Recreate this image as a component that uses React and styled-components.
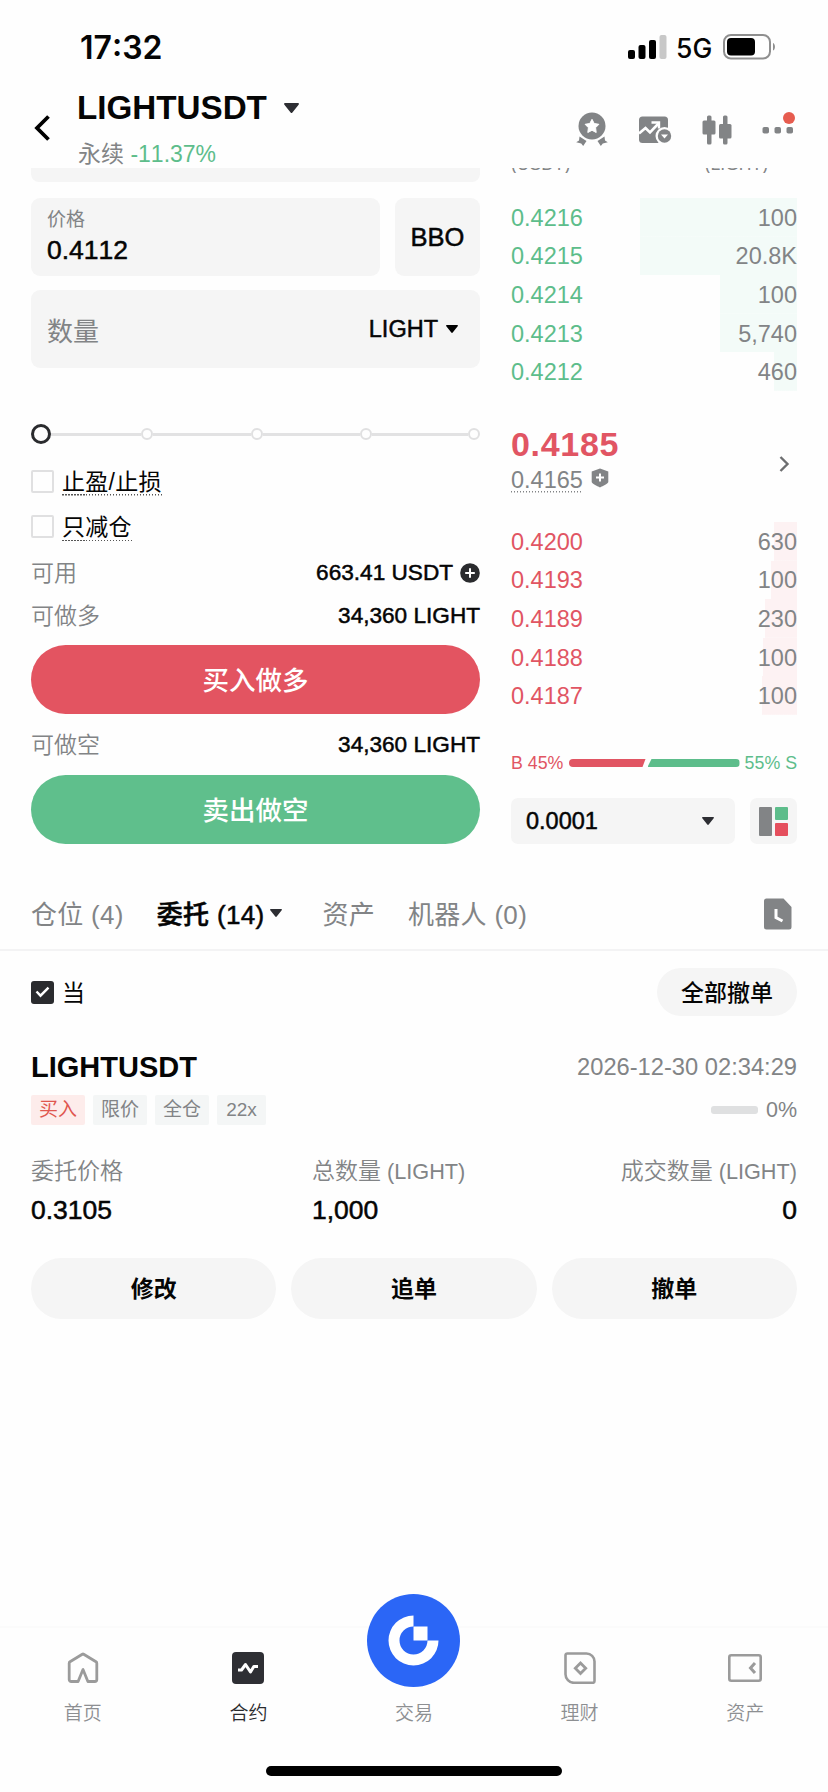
import React from 'react'
import styled, { createGlobalStyle } from 'styled-components'

// *****************************
// data
// *****************************
const BIDS = [
  { price: '0.4216', size: '100', depth: 157 },
  { price: '0.4215', size: '20.8K', depth: 157 },
  { price: '0.4214', size: '100', depth: 77 },
  { price: '0.4213', size: '5,740', depth: 77 },
  { price: '0.4212', size: '460', depth: 23 },
]

const ASKS = [
  { price: '0.4200', size: '630', depth: 23 },
  { price: '0.4193', size: '100', depth: 26 },
  { price: '0.4189', size: '230', depth: 32 },
  { price: '0.4188', size: '100', depth: 34 },
  { price: '0.4187', size: '100', depth: 35 },
]

const TAGS = ['限价', '全仓', '22x']

// *****************************
// icons
// *****************************
const SignalIcon = () => (
  <svg width="39" height="25" viewBox="0 0 39 25">
    <rect x="0" y="15" width="7" height="9" rx="2" />
    <rect x="10.5" y="10" width="7" height="14" rx="2" />
    <rect x="21" y="5" width="7" height="19" rx="2" />
    <rect x="31.5" y="0" width="7" height="24" rx="2" fill="#c8c8c8" />
  </svg>
)

const BatteryIcon = () => (
  <svg width="54" height="26" viewBox="0 0 54 26">
    <rect x="1" y="1" width="46" height="23.5" rx="7" fill="none" stroke="#8f8f8f" strokeWidth="2" />
    <rect x="4" y="4" width="28" height="17.5" rx="4" />
    <path d="M50 9c2.6.8 2.6 6.8 0 7.6z" fill="#8f8f8f" />
  </svg>
)

const BackIcon = () => (
  <svg width="17" height="28" viewBox="0 0 17 28">
    <path d="M14.5 2.5 3 14l11.5 11.5" fill="none" stroke="#000" strokeWidth="3.8" />
  </svg>
)

const Caret = ({ width = 15, height = 9, color = '#2d2e33' }) => (
  <svg width={width} height={height} viewBox="0 0 15 9" preserveAspectRatio="none">
    <path d="M1 0h13c1 0 1.2.9.6 1.5L8.4 8.5c-.5.6-1.3.6-1.8 0L.4 1.5C-.2.9 0 0 1 0z" fill={color} />
  </svg>
)

const MedalIcon = () => (
  <svg width="34" height="36" viewBox="0 0 34 36">
    <circle cx="17" cy="14" r="13.5" fill="#828486" />
    <path
      d="m17 7.3 2.2 4.2 4.7.8-3.3 3.4.6 4.8-4.2-2.2-4.2 2.2.6-4.8-3.3-3.4 4.7-.8z"
      fill="#fff"
      stroke="#fff"
      strokeWidth="1"
      strokeLinejoin="round"
    />
    <path d="m4.5 24.5 7 4.5-3.3 5-2-2.5-5-1.3 2.8-1.8zM29.5 24.5l-7 4.5 3.3 5 2-2.5 5-1.3-2.8-1.8z" fill="#828486" />
  </svg>
)

const ChartIcon = () => (
  <svg width="33" height="28" viewBox="0 0 33 28">
    <rect x="0" y="0.5" width="29" height="26.5" rx="3.5" fill="#828486" />
    <path d="m0 17.5 6.5-5.5 4.5 4.5 8.5-9" fill="none" stroke="#fff" strokeWidth="2.6" />
    <path d="M12.5 6.5H20v6" fill="none" stroke="#fff" strokeWidth="2.4" />
    <circle cx="25.5" cy="20" r="9" fill="#fefefe" />
    <circle cx="25.5" cy="20" r="6.7" fill="#828486" />
    <path d="M22 18.5h7l-3.5 4z" fill="#fff" />
  </svg>
)

const CandlesIcon = () => (
  <svg width="30" height="30" viewBox="0 0 30 30" fill="#828486">
    <rect x="5" y="0.5" width="4.5" height="29" rx="1.5" />
    <rect x="0.5" y="5.5" width="13" height="14" rx="1.5" />
    <rect x="21" y="0.5" width="4.5" height="29" rx="1.5" />
    <rect x="17" y="9" width="12.5" height="14.5" rx="1.5" />
  </svg>
)

const MoreIcon = () => (
  <svg width="34" height="36" viewBox="0 0 34 36">
    <g fill="#828486">
      <rect x="0.5" y="15" width="6.5" height="6.5" rx="1.8" />
      <rect x="12.5" y="15" width="6.5" height="6.5" rx="1.8" />
      <rect x="24.5" y="15" width="6.5" height="6.5" rx="1.8" />
    </g>
    <circle cx="27" cy="6" r="6" fill="#e65c4f" />
  </svg>
)

const PlusIcon = () => (
  <svg width="20" height="20" viewBox="0 0 20 20">
    <circle cx="10" cy="10" r="9.8" fill="#2a2b2e" />
    <path d="M10 5.2v9.6M5.2 10h9.6" stroke="#fff" strokeWidth="2" />
  </svg>
)

const ShieldIcon = () => (
  <svg width="18" height="20" viewBox="0 0 18 20">
    <path d="M9 .5 17.3 3.5v10.500c0 1.500-5.300 3.800-8.300 5.500-3-1.700-8.300-4-8.300-5.500V3.500z" fill="#828486" />
    <path d="M9 5.500v8M5 9.500h8" stroke="#fff" strokeWidth="2" />
  </svg>
)

const NextIcon = () => (
  <svg width="11" height="18" viewBox="0 0 11 18">
    <path d="m1.5 2 7 7-7 7" fill="none" stroke="#6d6e70" strokeWidth="2.4" />
  </svg>
)

const LayoutIcon = () => (
  <svg width="29" height="29" viewBox="0 0 29 29">
    <rect width="13" height="29" rx="1" fill="#828486" />
    <rect x="16" width="13" height="13" rx="1" fill="#5dbd8b" />
    <rect x="16" y="16" width="13" height="13" rx="1" fill="#e54f5d" />
  </svg>
)

const HistoryIcon = () => (
  <svg width="28" height="32" viewBox="0 0 28 32">
    <path d="M2.5.5h17l8 8.5v20a2.5 2.5 0 0 1-2.5 2.5H2.5A2.5 2.5 0 0 1 0 29V3A2.5 2.5 0 0 1 2.5.5z" fill="#828486" />
    <path d="M12 11v8.5l6.5 3.5" fill="none" stroke="#fff" strokeWidth="3" />
  </svg>
)

const CheckIcon = () => (
  <svg width="15" height="12" viewBox="0 0 15 12">
    <path d="m1.5 5.500 4 4.200 8-8" fill="none" stroke="#fff" strokeWidth="2.4" />
  </svg>
)

const HomeIcon = () => (
  <svg width="32" height="32" viewBox="0 0 32 32">
    <path
      d="M15.3 2.2a1.5 1.5 0 0 1 1.4 0L29 9.8c.5.3.8.8.8 1.4v16.300a2 2 0 0 1-2 2h-6.900L16 17.5l-4.900 12H4.200a2 2 0 0 1-2-2V11.200c0-.6.3-1.100.8-1.400z"
      fill="none"
      stroke="#9b9b9b"
      strokeWidth="2.8"
      strokeLinejoin="round"
    />
  </svg>
)

const FuturesIcon = () => (
  <svg width="32" height="32" viewBox="0 0 32 32">
    <rect width="32" height="32" rx="4" fill="#2e2f34" />
    <path d="M6 18h3.5l4-5.5 5 7.5 3.3-5.5H26" fill="none" stroke="#fff" strokeWidth="3" strokeLinejoin="round" />
  </svg>
)

const EarnIcon = () => (
  <svg width="32" height="32" viewBox="0 0 32 32">
    <path
      d="M3.3 1.5h19.200a8 8 0 0 1 8 8V29a1.800 1.800 0 0 1-1.800 1.800H10A8.500 8.500 0 0 1 1.500 22V3.300A1.800 1.800 0 0 1 3.300 1.500z"
      fill="none"
      stroke="#9b9b9b"
      strokeWidth="2.6"
    />
    <path d="m16.500 11 5.200 5.200-5.200 5.200-5.200-5.200z" fill="none" stroke="#9b9b9b" strokeWidth="2.8" />
  </svg>
)

const WalletIcon = () => (
  <svg width="34" height="28" viewBox="0 0 34 28">
    <rect x="1.3" y="1.3" width="31.4" height="25.4" rx="2" fill="none" stroke="#9b9b9b" strokeWidth="2.6" />
    <path d="m27 9-4.5 5 4.500 5" fill="none" stroke="#9b9b9b" strokeWidth="3" />
  </svg>
)

const TradeIcon = () => (
  <svg width="93" height="93" viewBox="0 0 93 93">
    <circle cx="46.5" cy="46.5" r="46.5" fill="#2b66f6" />
    <path d="M46.5 21.5a25 25 0 1 0 25 25h-11a14 14 0 1 1-14-14z" fill="#fff" />
    <rect x="46.5" y="32.5" width="14" height="14" fill="#fff" />
  </svg>
)

// *****************************
// order book
// *****************************
const BookSide = ({ rows, side }) => (
  <BookRows>
    {rows.map(({ price, size, depth }) => (
      <BookRow key={price} $side={side} style={{ backgroundSize: `${depth}px 100%` }}>
        <BookPrice $side={side}>{price}</BookPrice>
        <BookSize>{size}</BookSize>
      </BookRow>
    ))}
  </BookRows>
)

export default () => (
  <Screen>
    <GlobalStyle />
    <StatusBar>
      <Clock>17:32</Clock>
      <StatusIcons>
        <SignalIcon />
        <Network>5G</Network>
        <BatteryIcon />
      </StatusIcons>
    </StatusBar>

    <Header>
      <BackIcon />
      <Pair>
        <PairName>
          LIGHTUSDT
          <Caret height={10} />
        </PairName>
        <PairInfo>
          永续 <Change>-11.37%</Change>
        </PairInfo>
      </Pair>
      <HeaderIcons>
        <MedalIcon />
        <ChartIcon />
        <CandlesIcon />
        <MoreIcon />
      </HeaderIcons>
    </Header>

    <Trade>
      <Form>
        <ScrolledField />
        <FieldRow>
          <PriceField>
            <FieldLabel>价格</FieldLabel>
            <FieldValue>0.4112</FieldValue>
          </PriceField>
          <BboButton>BBO</BboButton>
        </FieldRow>
        <AmountField>
          <Placeholder>数量</Placeholder>
          <Unit>
            LIGHT
            <Caret width={12} height={8} color="#000" />
          </Unit>
        </AmountField>
        <Slider>
          <Thumb />
          <Track $width={90} />
          <Stop />
          <Track $width={98} />
          <Stop />
          <Track $width={97} />
          <Stop />
          <Track $width={96} />
          <Stop />
        </Slider>
        <Option>
          <Checkbox />
          <OptionLabel>止盈/止损</OptionLabel>
        </Option>
        <Option>
          <Checkbox />
          <OptionLabel>只减仓</OptionLabel>
        </Option>
        <Balance $height={43}>
          <BalanceLabel>可用</BalanceLabel>
          <BalanceValue>
            663.41 USDT
            <PlusIcon />
          </BalanceValue>
        </Balance>
        <Balance $height={43}>
          <BalanceLabel>可做多</BalanceLabel>
          <BalanceValue>34,360 LIGHT</BalanceValue>
        </Balance>
        <Submit $side="buy">买入做多</Submit>
        <Balance $height={61}>
          <BalanceLabel>可做空</BalanceLabel>
          <BalanceValue>34,360 LIGHT</BalanceValue>
        </Balance>
        <Submit $side="sell">卖出做空</Submit>
      </Form>

      <Book>
        <BookHead>
          <span>(USDT)</span>
          <span>(LIGHT)</span>
        </BookHead>
        <BookSide rows={BIDS} side="bid" />
        <Ticker>
          <Prices>
            <LastPrice>0.4185</LastPrice>
            <MarkPrice>
              <MarkValue>0.4165</MarkValue>
              <ShieldIcon />
            </MarkPrice>
          </Prices>
          <NextIcon />
        </Ticker>
        <BookSide rows={ASKS} side="ask" />
        <Ratio>
          <RatioText $side="ask">B 45%</RatioText>
          <RatioBar>
            <RatioBuy />
            <RatioSell />
          </RatioBar>
          <RatioText $side="bid">55% S</RatioText>
        </Ratio>
        <BookTools>
          <StepSelect>
            0.0001
            <Caret width={12} height={8} />
          </StepSelect>
          <LayoutButton>
            <LayoutIcon />
          </LayoutButton>
        </BookTools>
      </Book>
    </Trade>

    <Tabs>
      <Tab $gap={33}>仓位 (4)</Tab>
      <Tab $active $gap={40}>
        委托 (14)
        <Caret width={12} height={8} />
      </Tab>
      <Tab $gap={33}>资产</Tab>
      <Tab>机器人 (0)</Tab>
      <HistoryIcon />
    </Tabs>

    <Filter>
      <Checked>
        <CheckIcon />
      </Checked>
      <FilterLabel>当</FilterLabel>
      <CancelAll>全部撤单</CancelAll>
    </Filter>

    <Order>
      <OrderHead>
        <OrderName>LIGHTUSDT</OrderName>
        <OrderTime>2026-12-30 02:34:29</OrderTime>
      </OrderHead>
      <OrderMeta>
        <Tag $buy>买入</Tag>
        {TAGS.map(tag => (
          <Tag key={tag}>{tag}</Tag>
        ))}
        <Progress>
          <ProgressBar />
          0%
        </Progress>
      </OrderMeta>
      <OrderStats>
        <Stat>
          <StatLabel>委托价格</StatLabel>
          <StatValue>0.3105</StatValue>
        </Stat>
        <Stat>
          <StatLabel>
            总数量<Coin> (LIGHT)</Coin>
          </StatLabel>
          <StatValue>1,000</StatValue>
        </Stat>
        <Stat $right>
          <StatLabel>
            成交数量<Coin> (LIGHT)</Coin>
          </StatLabel>
          <StatValue>0</StatValue>
        </Stat>
      </OrderStats>
      <OrderActions>
        <ActionButton>修改</ActionButton>
        <ActionButton>追单</ActionButton>
        <ActionButton>撤单</ActionButton>
      </OrderActions>
    </Order>

    <NavBar>
      <NavItem>
        <NavIcon>
          <HomeIcon />
        </NavIcon>
        首页
      </NavItem>
      <NavItem $active>
        <NavIcon>
          <FuturesIcon />
        </NavIcon>
        合约
      </NavItem>
      <NavItem>
        <NavIcon $raised>
          <TradeIcon />
        </NavIcon>
        交易
      </NavItem>
      <NavItem>
        <NavIcon>
          <EarnIcon />
        </NavIcon>
        理财
      </NavItem>
      <NavItem>
        <NavIcon>
          <WalletIcon />
        </NavIcon>
        资产
      </NavItem>
    </NavBar>
    <HomeIndicator />
  </Screen>
)

const GlobalStyle = createGlobalStyle`
  * {
    box-sizing: border-box;
  }

  body {
    margin: 0;
    background: #fefefe;
  }

  button {
    margin: 0;
    padding: 0;
    border: 0;
    font: inherit;
    color: inherit;
  }

  svg {
    display: block;
    flex: none;
  }
`

const GREEN = '#5dbd8b'
const RED = '#e15563'
const GREY = '#828486'
const FIELD = '#f5f5f5'

// Liberation Sans has no medium cut, a thin stroke stands in for it
const medium = `
  font-weight: 500;
  -webkit-text-stroke: 0.5px currentColor;
`

const dotted = color => `
  background: repeating-linear-gradient(90deg, ${color} 0 1.5px, transparent 1.5px 3px) left bottom / 100% 1.5px no-repeat;
`

const Screen = styled.div`
  display: flex;
  flex-direction: column;
  width: 828px;
  height: 1792px;
  overflow: hidden;
  background: #fefefe;
  color: #050505;
  font-family: 'Liberation Sans', 'Noto Sans CJK SC', sans-serif;
  font-kerning: none;
  white-space: nowrap;
`

const StatusBar = styled.div`
  display: flex;
  justify-content: space-between;
  align-items: center;
  height: 94px;
  padding: 0 51px 0 80px;
  font-family: Inter, sans-serif;
`

const Clock = styled.div`
  padding-top: 1px;
  font-size: 32px;
  font-weight: 600;
`

const StatusIcons = styled.div`
  display: flex;
  align-items: center;
`

const Network = styled.div`
  width: 56px;
  padding: 2px 0 0 9px;
  font-size: 26.5px;
  font-weight: 500;
  line-height: 30px;
`

const Header = styled.div`
  display: flex;
  height: 74px;
  padding: 0 32px 0 34px;

  & > svg {
    margin-top: 20px;
  }
`

const Pair = styled.div`
  margin-left: 26px;
`

const PairName = styled.div`
  display: flex;
  align-items: center;
  gap: 17px;
  height: 28px;
  font-size: 33.2px;
  font-weight: 700;
`

const PairInfo = styled.div`
  margin-top: 16px;
  padding-left: 1px;
  color: ${GREY};
  font-size: 23px;
  line-height: 32px;
`

const Change = styled.span`
  color: ${GREEN};
`

const HeaderIcons = styled.div`
  display: flex;
  gap: 30px;
  align-items: center;
  margin: 0 0 0 auto;
  height: 72px;
`

const Trade = styled.div`
  display: flex;
  justify-content: space-between;
  padding: 0 31px;
`

const Form = styled.div`
  width: 449px;
`

/* lower edge of the field that is scrolled under the header */
const ScrolledField = styled.div`
  height: 14px;
  border-radius: 0 0 8px 8px;
  background: ${FIELD};
`

const FieldRow = styled.div`
  display: flex;
  gap: 15px;
  margin-top: 16px;
`

const PriceField = styled.div`
  flex: 1;
  height: 78px;
  padding: 8px 16px 0;
  border-radius: 9px;
  background: ${FIELD};
`

const FieldLabel = styled.div`
  height: 28px;
  color: ${GREY};
  font-size: 19px;
  line-height: 28px;
`

const FieldValue = styled.div`
  ${medium}
  font-size: 26.5px;
  line-height: 32px;
`

const BboButton = styled.button`
  ${medium}
  width: 85px;
  height: 78px;
  border-radius: 9px;
  background: ${FIELD};
  font-size: 25.5px;
`

const AmountField = styled.div`
  display: flex;
  justify-content: space-between;
  align-items: center;
  height: 78px;
  margin-top: 14px;
  padding: 0 22px 0 16px;
  border-radius: 9px;
  background: ${FIELD};
`

const Placeholder = styled.div`
  color: ${GREY};
  font-size: 26px;
`

const Unit = styled.div`
  ${medium}
  display: flex;
  align-items: center;
  gap: 8px;
  font-size: 23.5px;
`

const Slider = styled.div`
  display: flex;
  align-items: center;
  height: 20px;
  margin: 56px 0 16px;
`

const Thumb = styled.div`
  width: 20px;
  height: 20px;
  border: 3px solid #2a2b2e;
  border-radius: 50%;
`

const Track = styled.div`
  width: ${({ $width }) => $width}px;
  height: 3px;
  background: #e2e2e3;
`

const Stop = styled.div`
  width: 12px;
  height: 12px;
  border: 2px solid #e0e0e1;
  border-radius: 50%;
`

const Option = styled.div`
  display: flex;
  align-items: center;
  gap: 8px;
  height: 45.5px;
`

const Checkbox = styled.div`
  width: 23px;
  height: 23px;
  margin-bottom: 3px;
  border: 2px solid #e0e0e1;
  border-radius: 2px;
`

const OptionLabel = styled.div`
  height: 27px;
  margin-bottom: 1px;
  font-size: 23px;
  letter-spacing: 0.3px;
  line-height: 26px;
  ${dotted('#555')}
`

const Balance = styled.div`
  display: flex;
  justify-content: space-between;
  align-items: center;
  height: ${({ $height }) => $height}px;
`

const BalanceLabel = styled.div`
  color: ${GREY};
  font-size: 23px;
  font-weight: 350;
  line-height: 30px;
`

const BalanceValue = styled.div`
  ${medium}
  display: flex;
  align-items: center;
  gap: 7px;
  font-size: 22.6px;
  line-height: 30px;
`

const Submit = styled.button`
  width: 100%;
  height: 69px;
  margin-top: ${({ $side }) => ($side === 'buy' ? 8 : 0)}px;
  padding-bottom: 2px;
  border-radius: 35px;
  background: ${({ $side }) => ($side === 'buy' ? '#e35461' : '#5fbf8c')};
  color: #fff;
  font-size: 26.5px;
  font-weight: 500;
`

const Book = styled.div`
  width: 286px;
`

const BookHead = styled.div`
  display: flex;
  justify-content: space-between;
  align-items: flex-end;
  height: 5px;
  margin-bottom: 25px;
  padding-right: 29px;
  overflow: hidden;
  color: ${GREY};
  font-size: 17.5px;
  line-height: 18px;
`

const BookRows = styled.div`
  display: flex;
  flex-direction: column;
  height: 193px;
`

const BookRow = styled.div`
  display: flex;
  flex: 1;
  justify-content: space-between;
  align-items: center;
  padding-top: 2px;
  font-size: 23.5px;
  background: ${({ $side }) =>
      $side === 'bid' ? 'linear-gradient(#f3fbf8, #f3fbf8)' : 'linear-gradient(#fdf2f3, #fdf2f3)'}
    right / 0 100% no-repeat;
`

const BookPrice = styled.span`
  color: ${({ $side }) => ($side === 'bid' ? GREEN : RED)};
`

const BookSize = styled.span`
  color: ${GREY};
`

const Ticker = styled.div`
  display: flex;
  justify-content: space-between;
  align-items: center;
  height: 131px;
  padding: 14px 7px 0 0;
`

const Prices = styled.div`
  padding-bottom: 10px;
`

const LastPrice = styled.div`
  color: ${RED};
  font-size: 34px;
  font-weight: 700;
  letter-spacing: 0.7px;
  line-height: 38px;
`

const MarkPrice = styled.div`
  display: flex;
  align-items: center;
  gap: 8px;
  color: ${GREY};
  font-size: 23.5px;
`

const MarkValue = styled.div`
  height: 27px;
  margin-top: 3px;
  line-height: 29px;
  ${dotted('#828486')}
`

const Ratio = styled.div`
  display: flex;
  justify-content: space-between;
  align-items: center;
  height: 24px;
  margin-top: 36px;
`

const RatioText = styled.div`
  color: ${({ $side }) => ($side === 'bid' ? GREEN : RED)};
  font-size: 17.8px;
`

const RatioBar = styled.div`
  display: flex;
  width: 171px;
  height: 8px;
`

const RatioBuy = styled.div`
  width: 77px;
  border-radius: 4px 0 0 4px;
  background: ${RED};
  clip-path: polygon(0 0, 100% 0, calc(100% - 3px) 100%, 0 100%);
`

const RatioSell = styled.div`
  flex: 1;
  margin-left: 2px;
  border-radius: 0 4px 4px 0;
  background: ${GREEN};
  clip-path: polygon(4px 0, 100% 0, 100% 100%, 0 100%);
`

const BookTools = styled.div`
  display: flex;
  justify-content: space-between;
  margin-top: 23px;
`

const StepSelect = styled.div`
  ${medium}
  display: flex;
  justify-content: space-between;
  align-items: center;
  width: 224px;
  height: 46px;
  padding: 0 21px 0 15px;
  border-radius: 7px;
  background: ${FIELD};
  font-size: 23.5px;
`

const LayoutButton = styled.div`
  display: flex;
  justify-content: center;
  align-items: center;
  width: 47px;
  height: 46px;
  border-radius: 7px;
  background: ${FIELD};
`

const Tabs = styled.div`
  display: flex;
  align-items: center;
  height: 107px;
  padding: 33px 36px 0 31px;
  border-bottom: 2px solid #f3f3f4;

  & > svg {
    margin: 1px 0 0 auto;
  }
`

const Tab = styled.div`
  display: flex;
  align-items: center;
  gap: 6px;
  margin-right: ${({ $gap = 0 }) => $gap}px;
  padding-bottom: 2px;
  color: ${GREY};
  font-size: 26px;
  letter-spacing: 0.3px;
  ${({ $active }) => $active && `${medium} color: #050505;`}

  & > svg {
    margin-top: 2px;
  }
`

const Filter = styled.div`
  display: flex;
  align-items: center;
  height: 48px;
  margin-top: 17px;
  padding: 0 31px;
`

const Checked = styled.div`
  display: flex;
  justify-content: center;
  align-items: center;
  width: 23px;
  height: 23px;
  border-radius: 3px;
  background: #2a2b2e;
`

const FilterLabel = styled.div`
  margin-left: 8px;
  padding-bottom: 2px;
  font-size: 23px;
`

const CancelAll = styled.button`
  width: 140px;
  height: 48px;
  margin-left: auto;
  padding-bottom: 3px;
  border-radius: 24px;
  background: ${FIELD};
  font-size: 23px;
  font-weight: 500;
`

const Order = styled.div`
  padding: 0 31px;
`

const OrderHead = styled.div`
  display: flex;
  justify-content: space-between;
  align-items: center;
  height: 36px;
  margin-top: 33px;
`

const OrderName = styled.div`
  font-size: 29px;
  font-weight: 700;
`

const OrderTime = styled.div`
  color: ${GREY};
  font-size: 23.7px;
`

const OrderMeta = styled.div`
  display: flex;
  gap: 8px;
  margin-top: 10px;
`

const Tag = styled.div`
  min-width: 49px;
  height: 30px;
  padding: 0 8px;
  border-radius: 2px;
  background: ${({ $buy }) => ($buy ? '#fdeceb' : '#f4f6f6')};
  color: ${({ $buy }) => ($buy ? '#e0574f' : GREY)};
  font-size: 19px;
  line-height: 30px;
  text-align: center;
`

const Progress = styled.div`
  display: flex;
  align-items: center;
  gap: 8px;
  margin-left: auto;
  color: ${GREY};
  font-size: 21.5px;
`

const ProgressBar = styled.div`
  width: 47px;
  height: 8px;
  border-radius: 3px;
  background: #dfe0e1;
`

const OrderStats = styled.div`
  display: grid;
  grid-template-columns: 281px 1fr 1fr;
  margin-top: 29px;
`

const Stat = styled.div`
  text-align: ${({ $right }) => ($right ? 'right' : 'left')};
`

const StatLabel = styled.div`
  height: 36px;
  color: ${GREY};
  font-size: 23px;
  font-weight: 350;
  line-height: 34px;
`

const Coin = styled.span`
  font-size: 21.7px;
`

const StatValue = styled.div`
  ${medium}
  height: 40px;
  font-size: 26.5px;
  line-height: 40px;
`

const OrderActions = styled.div`
  display: grid;
  grid-template-columns: repeat(3, 1fr);
  gap: 15px;
  margin-top: 28px;
`

const ActionButton = styled.button`
  height: 61px;
  padding-bottom: 4px;
  border-radius: 31px;
  background: ${FIELD};
  font-size: 23px;
  font-weight: 700;
`

const NavBar = styled.div`
  display: flex;
  margin-top: auto;
  height: 140px;
  border-top: 2px solid #fbfbfb;
`

const NavItem = styled.div`
  display: flex;
  flex: 1;
  flex-direction: column;
  align-items: center;
  color: ${({ $active }) => ($active ? '#2a2b2e' : '#8d8f92')};
  font-size: 19px;
  font-weight: 350;
  line-height: 28px;
`

const NavIcon = styled.div`
  display: flex;
  flex: none;
  justify-content: center;
  align-items: center;
  height: 80px;
  margin-bottom: -8px;
  ${({ $raised }) => $raised && 'padding-bottom: 56px;'}
`

const HomeIndicator = styled.div`
  flex: none;
  width: 296px;
  height: 10px;
  margin: 0 auto 16px;
  border-radius: 5px;
  background: #000;
`
